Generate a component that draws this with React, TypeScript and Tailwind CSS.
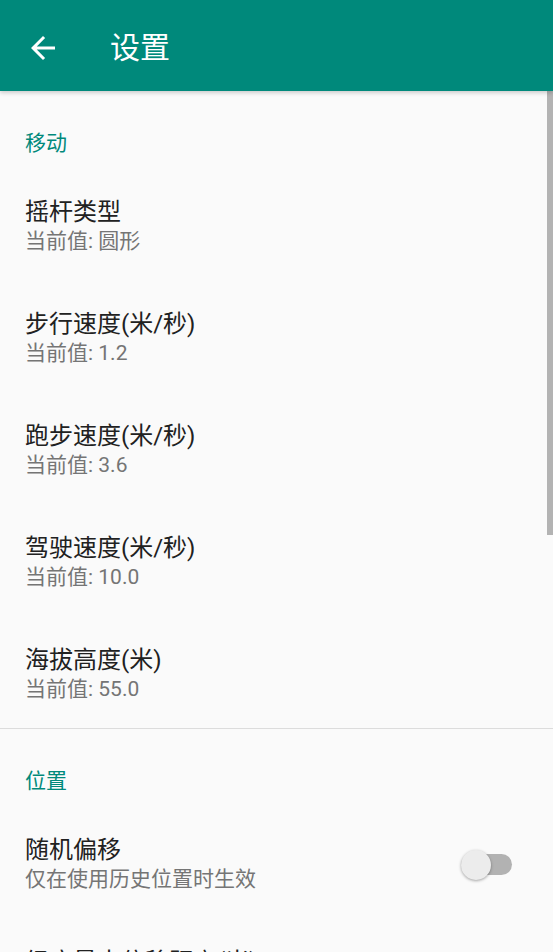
import React from "react";

const FONT = { fontFamily: 'Roboto, "Noto Sans CJK SC", "Noto Sans", sans-serif' };

function Category({ label }: { label: string }) {
  return (
    <div className="pt-[37px] pb-[10px] pl-[25px]">
      <div className="text-[21px] leading-[30px] text-[#00897b]">{label}</div>
    </div>
  );
}

function Item({ title, summary, toggle }: { title: string; summary?: string; toggle?: boolean }) {
  return (
    <div className="flex items-center pt-[29px] pb-[24px] pl-[25px] pr-[41px]">
      <div className="flex-1">
        <div className="text-[24px] leading-[30px] text-[#212121]">{title}</div>
        {summary && <div className="text-[21px] leading-[29px] text-[#757575]">{summary}</div>}
      </div>
      {toggle && (
        <div className="relative w-[51px] h-[30px] flex items-center">
          <div className="w-[51px] h-[21px] rounded-full bg-[#b2b2b2]" />
          <div className="absolute left-[0px] top-0 w-[30px] h-[30px] rounded-full bg-[#ececec] shadow-[0_1px_3px_rgba(0,0,0,0.35)]" />
        </div>
      )}
    </div>
  );
}

export default function App() {
  return (
    <div className="relative w-[553px] h-[952px] overflow-hidden bg-[#fafafa]" style={FONT}>
      <div className="relative z-10 h-[91px] bg-[#00897b] flex items-center pt-[5px] shadow-[0_2px_4px_rgba(0,0,0,0.18)]">
        <svg className="ml-[25px]" width="36" height="36" viewBox="0 0 24 24" fill="#ffffff">
          <path d="M20 11H7.83l5.59-5.59L12 4l-8 8 8 8 1.41-1.41L7.83 13H20v-2z" />
        </svg>
        <div className="ml-[49px] text-[30px] leading-[36px] text-white">设置</div>
      </div>

      <Category label="移动" />
      <Item title="摇杆类型" summary="当前值: 圆形" />
      <Item title="步行速度(米/秒)" summary="当前值: 1.2" />
      <Item title="跑步速度(米/秒)" summary="当前值: 3.6" />
      <Item title="驾驶速度(米/秒)" summary="当前值: 10.0" />
      <Item title="海拔高度(米)" summary="当前值: 55.0" />
      <div className="h-px bg-[#dcdcdc]" />
      <Category label="位置" />
      <Item title="随机偏移" summary="仅在使用历史位置时生效" toggle />
      <Item title="经度最大偏移距离(米)" summary="当前值: 50.0" />

      <div className="absolute right-0 top-[91px] w-[6px] h-[444px] bg-[#b3b3b3]" />
    </div>
  );
}
